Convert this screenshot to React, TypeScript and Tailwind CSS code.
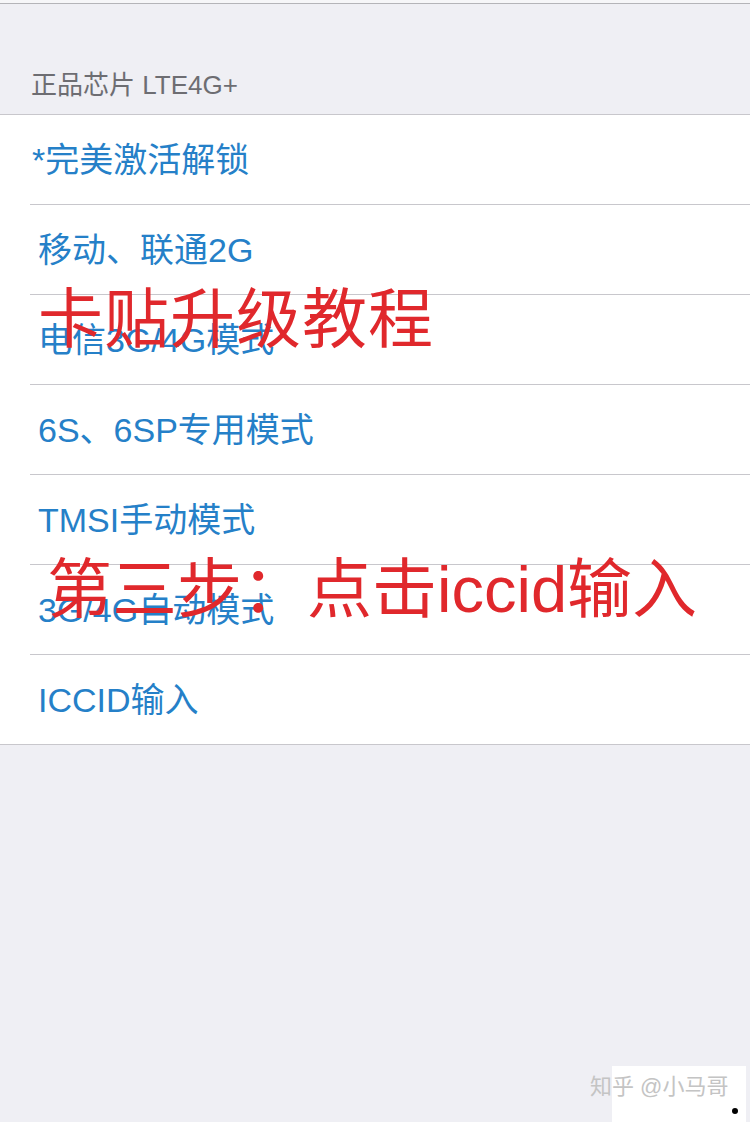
const rows = [
  "*完美激活解锁",
  "移动、联通2G",
  "电信3G/4G模式",
  "6S、6SP专用模式",
  "TMSI手动模式",
  "3G/4G自动模式",
  "ICCID输入",
];

const font = { fontFamily: '"Liberation Sans", "Noto Sans CJK SC", sans-serif' };

export default function App() {
  return (
    <div className="relative w-[750px] h-[1122px] overflow-hidden bg-[#efeff4]" style={font}>
      <div className="h-[3px] bg-[#f6f6f8]" />
      <div className="h-px bg-[#b4b4b8]" />

      <div className="h-[110px] flex items-end pl-[31px] pb-[16px]">
        <span className="text-[26px] leading-none text-[#6d6d72]">正品芯片 LTE4G+</span>
      </div>

      <div className="bg-white border-t border-b border-[#c8c7cc]">
        {rows.map((r, i) => (
          <div key={r} className="pl-[30px]">
            <div
              className={
                i < rows.length - 1
                  ? "h-[90px] flex items-center border-b border-[#c8c7cc]"
                  : "h-[89px] flex items-center"
              }
            >
              <span
                className={
                  i === 0
                    ? "pl-[2px] text-[34px] leading-none text-[#2580c8]"
                    : "pl-[8px] text-[34px] leading-none text-[#2580c8]"
                }
              >
                {r}
              </span>
            </div>
          </div>
        ))}
      </div>

      {/* red annotations drawn over the list */}
      <div className="absolute left-[38px] top-[287px] text-[65px] leading-none text-[#e0282c] tracking-[1px]">
        卡贴升级教程
      </div>
      <div className="absolute left-[47px] top-[557px] text-[65px] leading-none text-[#e0282c]">
        第三步：点击iccid输入
      </div>

      <div className="absolute right-[4px] bottom-0 w-[134px] h-[56px] bg-white">
        <div className="absolute left-[-22px] top-[10px] text-[22px] leading-none text-[#c4c4c4] whitespace-nowrap">
          知乎 @小马哥
        </div>
        <div className="absolute right-[8px] bottom-[8px] w-[6px] h-[6px] rounded-full bg-black" />
      </div>
    </div>
  );
}
